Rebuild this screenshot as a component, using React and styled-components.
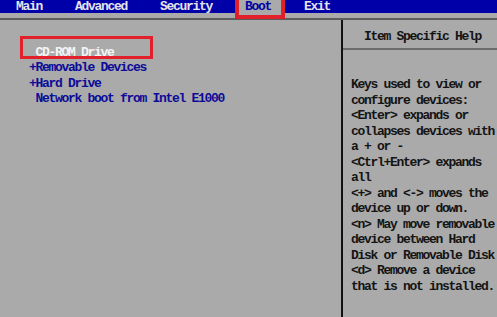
import React from 'react';
import styled, { createGlobalStyle } from 'styled-components';

const GlobalStyle = createGlobalStyle`
  html, body {
    margin: 0;
    padding: 0;
    background: #aaaaaa;
  }
`;

const Screen = styled.div`
  width: 497px;
  height: 317px;
  overflow: hidden;
  background: #aaaaaa;
  font-family: "Liberation Mono", "DejaVu Sans Mono", monospace;
  font-weight: bold;
  font-size: 13px;
  letter-spacing: -1.3px;
  display: flex;
  flex-direction: column;
`;

const MenuBar = styled.div`
  height: 13px;
  flex: none;
  background: #0000a8;
  display: flex;
  align-items: flex-start;
  gap: 33px;
  padding-left: 16px;
`;

const Tab = styled.div`
  position: relative;
  z-index: 1;
  line-height: 14px;
  white-space: pre;
  color: ${(p) => (p.$active ? '#0000a8' : '#e4e4ec')};
  ${(p) =>
    p.$active &&
    `
    background: #aaaaaa;
    height: 15px;
    border: 4px solid #e2202c;
    border-top: none;
    padding: 0 10px 0 6px;
    margin: 0 -14px 0 -10px;
  `}
`;

const Main = styled.div`
  flex: 1;
  margin-top: 5px;
  border-top: 2px solid #5c5c5c;
  display: grid;
  grid-template-columns: 341px 2px 1fr;
  min-height: 0;
`;

const LeftPanel = styled.div`
  padding: 25px 0 0 29px;
`;

const Divider = styled.div`
  background: #111111;
`;

const BootItem = styled.div`
  position: relative;
  white-space: pre;
  line-height: 15.4px;
  color: ${(p) => (p.$current ? '#f4f4f4' : '#0c0c98')};

  ${(p) =>
    p.$boxed &&
    `
    &::before {
      content: '';
      position: absolute;
      left: -9px;
      top: -9px;
      width: 127px;
      height: 17px;
      border: 3px solid #e2202c;
    }
  `}
`;

const RightPanel = styled.div`
  display: flex;
  flex-direction: column;
  overflow: hidden;
`;

const HelpTitle = styled.div`
  height: 28px;
  line-height: 34px;
  padding-left: 21px;
  color: #141414;
  white-space: pre;
  border-bottom: 2px solid #6c6c6c;
`;

const HelpBody = styled.div`
  padding: 27px 0 0 8px;
  color: #141414;
`;

const HelpLine = styled.div`
  white-space: pre;
  line-height: 15.5px;
`;

const tabs = ['Main', 'Advanced', 'Security', 'Boot', 'Exit'];

const bootOrder = [
  { label: ' CD-ROM Drive', current: true, boxed: true },
  { label: '+Removable Devices' },
  { label: '+Hard Drive' },
  { label: ' Network boot from Intel E1000' },
];

const helpLines = [
  'Keys used to view or',
  'configure devices:',
  '<Enter> expands or',
  'collapses devices with',
  'a + or -',
  '<Ctrl+Enter> expands',
  'all',
  '<+> and <-> moves the',
  'device up or down.',
  '<n> May move removable',
  'device between Hard',
  'Disk or Removable Disk',
  '<d> Remove a device',
  'that is not installed.',
];

const App = () => {
  return (
    <Screen>
      <GlobalStyle />
      <MenuBar>
        {tabs.map((t) => (
          <Tab key={t} $active={t === 'Boot'}>
            {t}
          </Tab>
        ))}
      </MenuBar>
      <Main>
        <LeftPanel>
          {bootOrder.map((item) => (
            <BootItem key={item.label} $current={item.current} $boxed={item.boxed}>
              {item.label}
            </BootItem>
          ))}
        </LeftPanel>
        <Divider />
        <RightPanel>
          <HelpTitle>Item Specific Help</HelpTitle>
          <HelpBody>
            {helpLines.map((line, i) => (
              <HelpLine key={i}>{line}</HelpLine>
            ))}
          </HelpBody>
        </RightPanel>
      </Main>
    </Screen>
  );
};

export default App;
